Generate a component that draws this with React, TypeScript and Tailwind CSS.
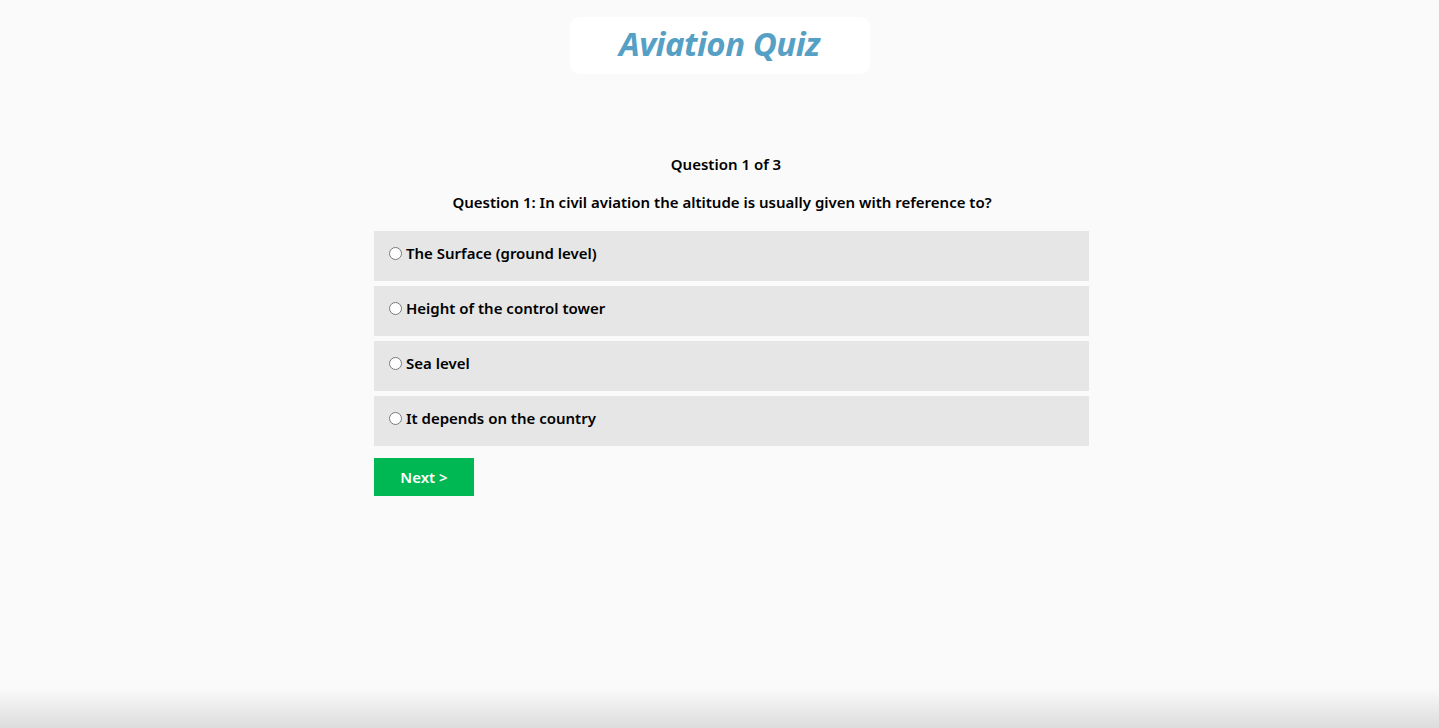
const OPTIONS = [
  "The Surface (ground level)",
  "Height of the control tower",
  "Sea level",
  "It depends on the country",
] as const;

export default function App() {
  return (
    <div
      className="relative flex h-[728px] w-full flex-col overflow-hidden bg-[#fafafa] text-black"
      style={{ fontFamily: '"Noto Sans", "Open Sans", sans-serif' }}
    >
      <header className="flex justify-center pt-[17px]">
        <div className="flex h-[57px] w-[300px] items-center justify-center rounded-[10px] bg-white pb-[4px]">
          <h1 className="text-[33px] font-bold italic leading-none tracking-[-0.5px] text-[#55a0c4]">
            Aviation Quiz
          </h1>
        </div>
      </header>

      <main className="mt-[80px] flex flex-col">
        <p className="pl-[13px] text-center text-[15px] font-semibold leading-[20px]">Question 1 of 3</p>
        <p className="mt-[18px] pl-[5px] text-center text-[15px] font-semibold leading-[20px]">
          Question 1: In civil aviation the altitude is usually given with reference to?
        </p>

        <ul className="ml-[374px] mt-[19px] flex w-[715px] flex-col gap-[5px]">
          {OPTIONS.map((option, i) => (
            <li key={option} className="h-[50px] bg-[#e6e6e6] px-[15px] pt-[12px]">
              <label className="flex items-center gap-[4px] text-[15px] font-semibold leading-[20px]">
                <input
                  type="radio"
                  name="q1"
                  value={i}
                  className="m-0 h-[13px] w-[13px] accent-gray-600"
                />
                {option}
              </label>
            </li>
          ))}
        </ul>

        <div className="ml-[374px] mt-[12px]">
          <button
            type="button"
            className="h-[38px] w-[100px] bg-[#00b853] text-[15px] font-semibold text-white"
          >
            Next &gt;
          </button>
        </div>
      </main>

      {/* window bottom shading from the original capture */}
      <div className="pointer-events-none absolute inset-x-0 bottom-0 h-[40px] bg-gradient-to-b from-transparent to-[#dcdcdc]" />
    </div>
  );
}
